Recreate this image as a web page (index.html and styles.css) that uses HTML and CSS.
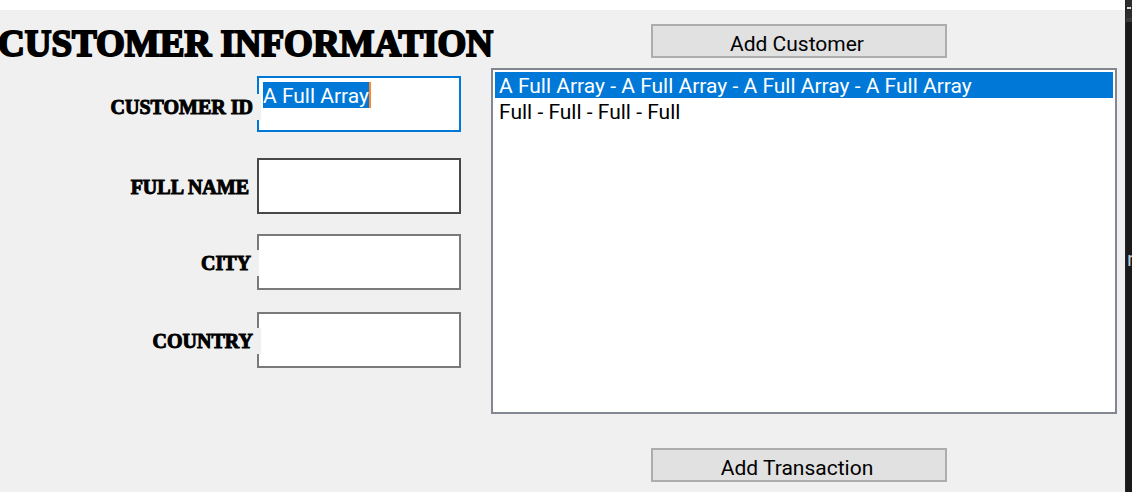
FILE: index.html
```html
<!DOCTYPE html>
<html lang="en">
<head>
<meta charset="utf-8">
<title>Customer Information</title>
<link rel="stylesheet" href="styles.css">
</head>
<body>
<div class="window">
  <main class="form">
    <section class="details">
      <h1 class="title">CUSTOMER INFORMATION</h1>
      <div class="field field-active">
        <label class="label label-wide" for="customer-id">CUSTOMER ID</label>
        <input class="input input-active" id="customer-id" type="text" value="A Full Array">
      </div>
      <div class="field field-name">
        <label class="label label-short" for="full-name">FULL NAME</label>
        <input class="input input-hover" id="full-name" type="text">
      </div>
      <div class="field field-city">
        <label class="label" for="city">CITY</label>
        <input class="input" id="city" type="text">
      </div>
      <div class="field field-country">
        <label class="label label-wide" for="country">COUNTRY</label>
        <input class="input" id="country" type="text">
      </div>
    </section>
    <section class="records">
      <button class="button" type="button">Add Customer</button>
      <select class="list" size="12" aria-label="Customers">
        <option class="item" selected>A Full Array - A Full Array - A Full Array - A Full Array</option>
        <option class="item">Full - Full - Full - Full</option>
      </select>
      <button class="button" type="button">Add Transaction</button>
    </section>
  </main>
  <aside class="editor">
    <div class="editor-bar"><span class="editor-mark"></span></div>
    <span class="editor-text">r</span>
  </aside>
</div>
</body>
</html>
```
FILE: styles.css
```css
* {
  box-sizing: border-box;
}

body {
  margin: 0;
  background: #f0f0f0;
  color: #000;
  font-family: Roboto, "Liberation Sans", sans-serif;
  font-size: 21px;
  line-height: 26px;
}

.window {
  display: flex;
  min-height: 100vh;
}

.form {
  flex: 1;
  min-width: 0;
  display: grid;
  grid-template-columns: 461px 1fr;
  column-gap: 30px;
  padding: 14px 8px 10px 0;
  border-top: 10px solid #fff;
}

.title {
  margin: 0 0 12px -2px;
  font-family: "Liberation Serif", serif;
  font-size: 37px;
  line-height: 40px;
  white-space: nowrap;
  -webkit-text-stroke: 2px #000;
}

.field {
  display: flex;
  justify-content: flex-end;
  align-items: flex-start;
}

.field-name {
  margin-top: 26px;
}

.field-city {
  margin-top: 20px;
}

.field-country {
  margin-top: 22px;
}

.label {
  position: relative;
  z-index: 1;
  margin: 16px -2px 0 0;
  padding-right: 8px;
  background: #f0f0f0;
  font-family: "Liberation Serif", serif;
  font-size: 20px;
  font-weight: bold;
  -webkit-text-stroke: 1px #000;
}

.label-wide {
  margin-right: -4px;
}

.label-short {
  margin-right: 0;
}

.field-active .label {
  margin-top: 18px;
}

.input {
  width: 204px;
  height: 56px;
  padding: 5px 4px 21px;
  border: 2px solid #7a7a7a;
  border-radius: 0;
  outline: none;
  background: #fff;
  font: inherit;
}

.input-hover {
  border-color: #484848;
}

.input-active {
  border-color: #0078d7;
  background: linear-gradient(90deg, #0078d7 106px, #ff8728 106px) 4px 4px / 108px 26px no-repeat #fff;
  color: #fff;
}

.records {
  display: flex;
  flex-direction: column;
  align-items: center;
}

.button {
  width: 296px;
  height: 34px;
  margin-right: 10px;
  padding: 5px 4px 0 0;
  border: 2px solid #adadad;
  border-radius: 0;
  background: #e1e1e1;
  color: #000;
  font: inherit;
}

.list {
  flex: 1;
  width: 100%;
  margin: 10px 0 34px;
  padding: 2px;
  border: 2px solid #828790;
  border-radius: 0;
  outline: none;
  overflow: hidden;
  background: #fff;
  color: #000;
  font: inherit;
  line-height: 24px;
}

.item {
  min-height: 26px;
  padding: 2px 4px 0;
}

.item:checked {
  background: linear-gradient(#0078d7, #0078d7);
  color: #fff;
  -webkit-text-fill-color: #fff;
}

.editor {
  width: 7px;
  overflow: hidden;
  border-left: 1px solid #252525;
  background: #1a1a1a;
  color: #b8cbd8;
}

.editor-bar {
  height: 22px;
  margin-bottom: 224px;
  padding: 7px 0 0 1px;
  border-bottom: 4px solid #38383b;
  background: #2d2d30;
}

.editor-mark {
  display: block;
  width: 4px;
  height: 2px;
  background: #d8d8d8;
}

.editor-text {
  padding-left: 1px;
}
```
